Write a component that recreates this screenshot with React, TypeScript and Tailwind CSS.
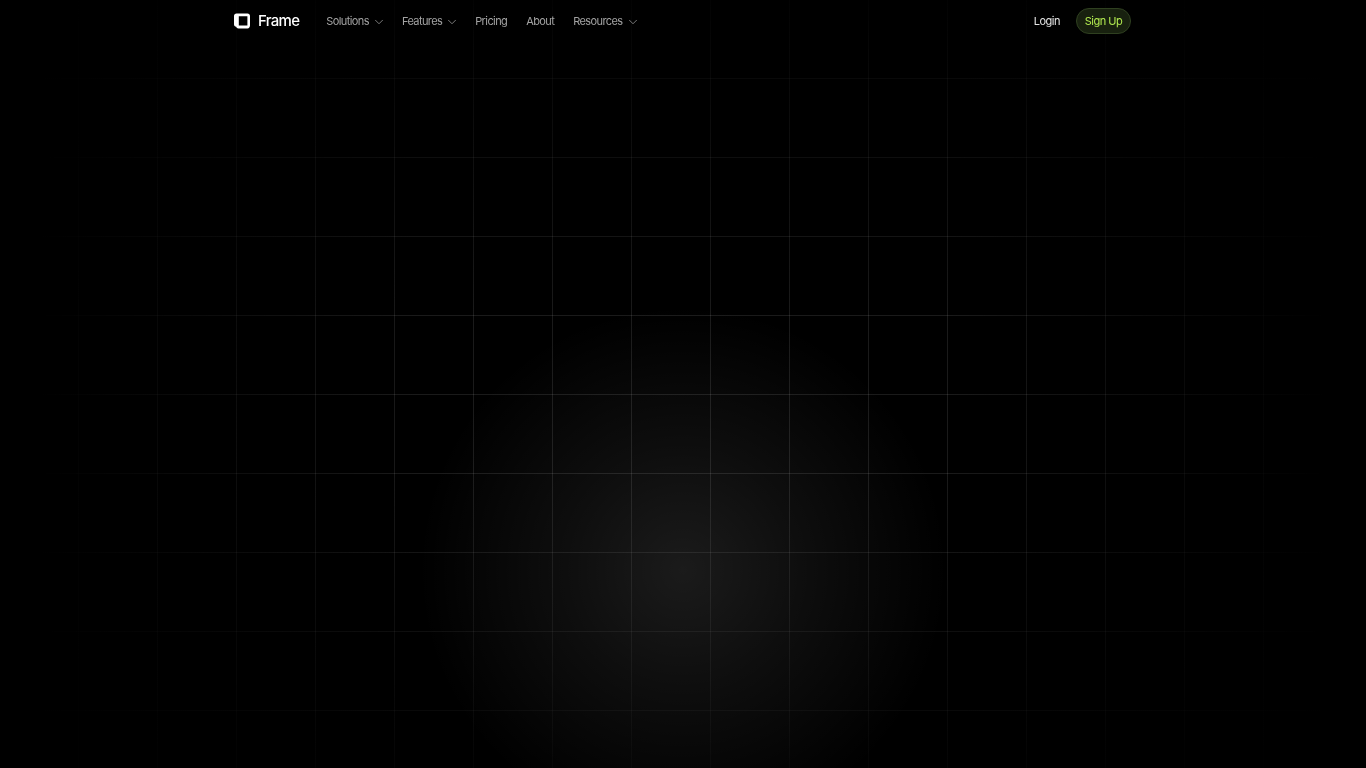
import { ChevronDown } from 'lucide-react';

const navItems = [
  { label: 'Solutions', chevron: true },
  { label: 'Features', chevron: true },
  { label: 'Pricing', chevron: false },
  { label: 'About', chevron: false },
  { label: 'Resources', chevron: true },
];

const Logo = () => (
  <svg width="16" height="16" viewBox="0 0 16 16" fill="none">
    <path
      fillRule="evenodd"
      d="M2.5 0.5H13.5C15 0.5 16 1.5 16 3V12.5C16 14 15 15.5 13.5 15.5H4.5C3.2 15.5 2.6 14.8 2.2 13.8C0.8 13.5 0 12.6 0 11.2V3C0 1.5 1 0.5 2.5 0.5ZM4.8 3.2V12.4H13.4V3.2H4.8Z"
      fill="#fff"
    />
  </svg>
);

export default function App() {
  return (
    <div className="h-[768px] overflow-hidden font-['Inter',sans-serif] bg-black bg-[radial-gradient(circle_265px_at_683px_570px,rgba(255,255,255,0.105),rgba(255,255,255,0.055)_45%,transparent_100%),linear-gradient(to_right,#000_40px,transparent_420px,transparent_946px,#000_1326px),linear-gradient(to_bottom,#000_-40px,transparent_320px,transparent_470px,#000_830px),linear-gradient(to_right,transparent_78px,rgba(255,255,255,0.1)_78px),linear-gradient(to_bottom,transparent_78px,rgba(255,255,255,0.1)_78px)] bg-[size:100%_100%,100%_100%,100%_100%,79px_79px,79px_79px]">
      <header className="mx-auto flex h-[42px] w-[896px] items-center justify-between will-change-transform">
        <div className="flex items-center -ml-px">
          <a className="flex items-center gap-2 text-white">
            <Logo />
            <span className="text-[15px] font-medium tracking-[-0.7px]">Frame</span>
          </a>
          <nav className="ml-[27px] flex items-center gap-[19px] pt-px text-[11px] tracking-[-0.6px] text-[#a3a3a3]">
            {navItems.map(item => (
              <a key={item.label} className="flex items-center gap-[3px]">
                <span>{item.label}</span>
                {item.chevron && <ChevronDown size={14} strokeWidth={1.5} className="-mr-[3px] text-[#8a8a8a]" />}
              </a>
            ))}
          </nav>
        </div>
        <div className="flex items-center gap-4 text-[11px] tracking-[-0.5px]">
          <a className="pt-px text-[#e5e5e5]">Login</a>
          <a className="flex h-[26px] w-[55px] items-center justify-center rounded-full border border-[#2f4020] bg-[#18210f] text-[#b0e84f]">
            Sign Up
          </a>
        </div>
      </header>
    </div>
  );
}
